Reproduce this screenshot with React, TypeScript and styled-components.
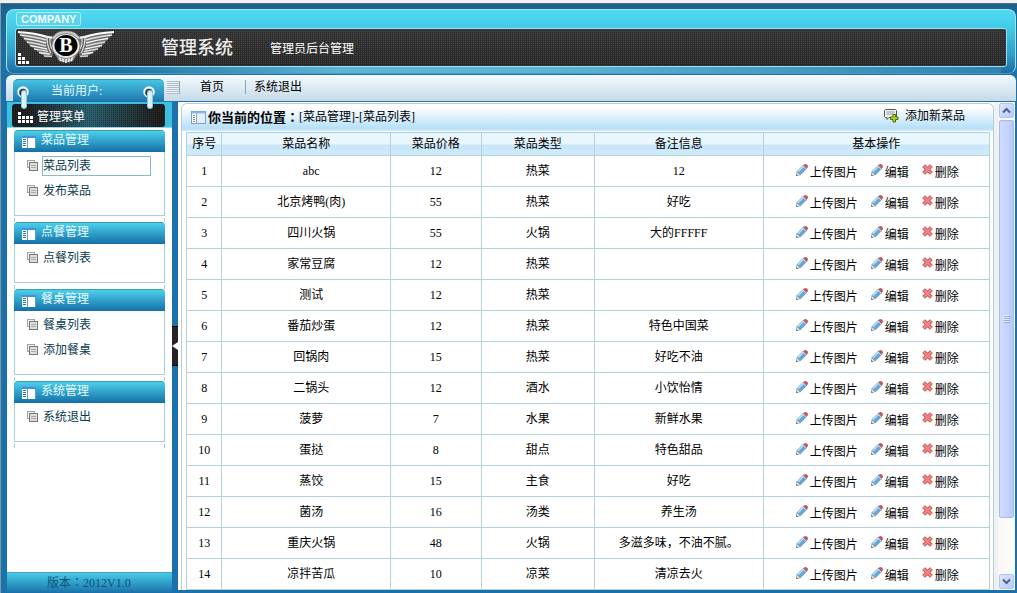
import React from "react";
import styled, { createGlobalStyle } from "styled-components";

const GlobalStyle = createGlobalStyle`
  *, *::before, *::after { box-sizing: border-box; }
  body {
    margin: 0;
    font-family: "Liberation Serif", "Noto Sans CJK SC", serif;
    font-size: 12px;
    line-height: 16px;
    color: #000;
    background: #1c6ea6;
  }
  a { color: inherit; text-decoration: none; }
  button { padding: 0; border: 0; font: inherit; color: inherit; background: none; cursor: pointer; }
  ul, h1, h2, p { margin: 0; padding: 0; list-style: none; font-weight: normal; }
  svg { display: block; flex: none; }
`;

const dots = "conic-gradient(#444 25%, transparent 0) 0 0 / 2px 2px";

const Shell = styled.div`
  display: flex;
  flex-direction: column;
  min-height: 100vh;
  padding: 6px 1px 3px 6px;
  border-top: 3px solid #f1f1ef;
  background: linear-gradient(90deg, #8299a5 1px, transparent 1px),
    linear-gradient(#6d8794 0, #1d5d89 1px, #176593 6px, #1c71aa 60px);
`;

const Header = styled.header`
  display: flex;
  flex-direction: column;
  position: relative;
  height: 65px;
  padding: 0 8px;
  border: 1px solid #a9e4f3;
  border-bottom-color: #4f97bb;
  border-radius: 8px;
  background: linear-gradient(#4fdaf3 0, #43cae7 18px, #2f9cc9 45px, #1b6ca2 100%);
  &::after {
    content: "";
    position: absolute;
    left: 108px;
    right: 14px;
    bottom: 0;
    height: 6px;
    background: linear-gradient(90deg, transparent, #5ab4d5 25%, #5ab4d5 50%, #2f83b3);
  }
`;

const Company = styled.div`
  align-self: flex-start;
  margin: 2px 0 2px 1px;
  padding: 0 4px;
  border: 1px solid #a4edf8;
  border-radius: 2px;
  font: bold 11px/12px "Liberation Sans", sans-serif;
  color: #f0feff;
  background: #5cd3eb;
`;

const TitleBar = styled.div`
  display: flex;
  align-items: center;
  gap: 37px;
  position: relative;
  height: 39px;
  border: 1px solid #9adff0;
  border-radius: 3px;
  color: #fff;
  background: ${dots}, linear-gradient(#343434, #262626);
`;

const Brand = styled.div`
  display: flex;
  align-items: center;
  gap: 45px;
  h1 { font-size: 18px; line-height: 24px; font-weight: 500; color: #ececec; }
`;

const Subtitle = styled.span`
  padding-top: 2px;
`;

const Nav = styled.nav`
  display: flex;
  flex: none;
  height: 27px;
  margin-top: 1px;
  border-bottom: 1px solid #2473ae;
  border-radius: 6px 6px 0 0;
  background: linear-gradient(#f3fafe, #c6d9e6);
`;

const UserTab = styled.div`
  position: relative;
  width: 151px;
  margin: 4px 3px 0 7px;
  padding-left: 38px;
  border-top: 1px solid #3591b8;
  border-radius: 5px 5px 0 0;
  line-height: 22px;
  color: #e6fbff;
  background: linear-gradient(#45c4e2, #1f79ae);
`;

const Ring = styled.svg<{ $side: "left" | "right" }>`
  position: absolute;
  top: 6px;
  ${(p) => p.$side}: ${(p) => (p.$side === "left" ? 4 : 8)}px;
  z-index: 2;
`;

const Stripes = styled.span`
  width: 13px;
  margin: 6px 0 7px;
  border-right: 1px solid #8ea5b4;
  background: repeating-linear-gradient(#adbbc5 0 1px, #eef4f8 1px 2px);
`;

const NavLink = styled.a<{ $divided?: boolean }>`
  align-self: flex-start;
  margin: 5px 0 0 ${(p) => (p.$divided ? 21 : 20)}px;
  padding-left: ${(p) => (p.$divided ? 8 : 0)}px;
  border-left: ${(p) => (p.$divided ? "1px solid #8ea5b4" : "0")};
  line-height: 14px;
`;

const Main = styled.div`
  display: flex;
  flex: 1;
  padding-right: 1px;
`;

const Sidebar = styled.aside`
  display: flex;
  flex-direction: column;
  width: 165px;
  flex: none;
  margin: 0 0 -2px 1px;
  background: #fff;
`;

const MenuTop = styled.div`
  padding: 2px 7px 0 5px;
  border-bottom: 1px solid #8fd8ea;
  background: #3cc0e2;
`;

const MenuTitle = styled.h2`
  display: flex;
  align-items: center;
  gap: 4px;
  height: 23px;
  padding: 3px 0 0 6px;
  border-radius: 3px;
  font-size: 12px;
  line-height: 20px;
  color: #fff;
  background: ${dots}, linear-gradient(90deg, #222 10%, #2d6271 50%, #222 95%);
  background-blend-mode: soft-light;
`;

const Groups = styled.div`
  display: flex;
  flex-direction: column;
  gap: 6px;
  flex: 1;
  padding: 2px 7px 0;
`;

const Group = styled.section`
  position: relative;
  &::after {
    content: "";
    position: absolute;
    left: 0;
    right: 0;
    top: calc(100% + 2px);
    height: 4px;
    border: solid #a8cbd6;
    border-width: 0 1px;
  }
`;

const GroupHead = styled.h2`
  display: flex;
  align-items: center;
  gap: 5px;
  height: 22px;
  padding-left: 8px;
  border-top: 1px solid #3a9cae;
  border-radius: 4px 4px 0 0;
  font-size: 12px;
  line-height: 16px;
  color: #e8fbff;
  background: linear-gradient(#4ad0ea, #156fa7);
  span { padding-bottom: 3px; }
`;

const GroupBody = styled.ul`
  padding: 1px 13px 12px 12px;
  border: solid #a8cfda;
  border-width: 0 1px 1px;
`;

const Item = styled.li`
  display: flex;
  align-items: center;
  gap: 4px;
  height: 25px;
  color: #0a3a50;
`;

const ItemLink = styled.a<{ $current?: boolean }>`
  flex: 1;
  border: 1px solid ${(p) => (p.$current ? "#86bac8" : "transparent")};
  line-height: 18px;
`;

const Version = styled.p`
  height: 20px;
  padding-left: 40px;
  line-height: 18px;
  color: #0e527a;
  border-top: 1px solid #4a9fb9;
  background: linear-gradient(#46cbe7, #1c75ac);
`;

const Centered = styled.span`
  font-family: "Noto Sans CJK TC", sans-serif;
`;

const Splitter = styled.div`
  display: flex;
  align-items: center;
  width: 6px;
  flex: none;
  background: #1c71aa;
  button { width: 6px; height: 40px; border: solid #000; border-width: 1px 0; background: #2a2226; }
`;

const Content = styled.main`
  display: flex;
  flex: 1;
  min-width: 0;
  background: #fff;
`;

const Panel = styled.section`
  flex: 1;
  min-width: 0;
  margin: 1px 0 0 3px;
  border: 1px solid #b3cfd4;
  border-bottom: 0;
  border-radius: 6px 6px 0 0;
`;

const PanelHead = styled.div`
  display: flex;
  align-items: center;
  height: 27px;
  padding: 0 28px 0 9px;
  border-radius: 6px 6px 0 0;
  background: linear-gradient(#fff 10%, #d9eefb 55%, #b5e0fa 90%, #cfeafa);
`;

const Location = styled.p`
  display: flex;
  flex: 1;
  margin-left: 2px;
  strong { font-size: 13px; }
`;

const AddLink = styled.a`
  display: flex;
  align-items: center;
  gap: 6px;
  padding-bottom: 3px;
`;

const Table = styled.table`
  table-layout: fixed;
  width: calc(100% - 7px);
  margin: 1px 3px 0 4px;
  border-collapse: collapse;
  text-align: center;
  th, td { padding: 0; border: 1px solid #b1d3d9; }
  th {
    height: 23px;
    font-weight: normal;
    background: linear-gradient(#e9f6fd 0 50%, #c7e6f8 50%, #d0ebfa);
  }
  td { height: 31px; }
  td:nth-child(2) { padding-left: 10px; }
`;

const Actions = styled.div`
  display: flex;
  justify-content: center;
  gap: 13px;
  padding: 3px 0 0 2px;
`;

const Action = styled.a`
  display: flex;
  gap: 2px;
  svg { margin-top: -1px; }
`;

const ScrollBar = styled.div`
  display: flex;
  flex-direction: column;
  gap: 2px;
  width: 21px;
  flex: none;
  padding: 1px 1px 1px 5px;
  background: linear-gradient(90deg, #eef0f1 4px, #f7f7f4 4px, #fdfdfb);
  button {
    display: flex;
    align-items: center;
    justify-content: center;
    height: 15px;
    border: 1px solid #b1c5f4;
    border-radius: 2px;
    background: linear-gradient(135deg, #dce7ff, #b7cafb);
  }
`;

const Track = styled.div`
  flex: 1;
`;

const Thumb = styled.div`
  display: flex;
  align-items: center;
  justify-content: center;
  height: 88%;
  border: 1px solid #a5bbef;
  border-radius: 2px;
  background: linear-gradient(90deg, #cfddff, #c3d3fd 60%, #b5c7f6);
`;

const Wing = () => (
  <g>
    <path d="M2 3 L30 6 L40 9 L38 22 L36 28 L30 28 L22 23 L12 15 Z" fill="#6f6f6f" />
    <path d="M2 3 Q20 4 31 8 L39 9" stroke="#fff" strokeWidth="2" fill="none" />
    <path d="M4 6 Q20 8 30 11" stroke="#e4e4e4" strokeWidth="1.6" fill="none" />
    <path d="M8 9.500 Q20 11 30 14" stroke="#f6f6f6" strokeWidth="1.7" fill="none" />
    <path d="M11 13 Q21 14.500 30 17" stroke="#dedede" strokeWidth="1.6" fill="none" />
    <path d="M14 16.500 Q22 18 31 20" stroke="#f6f6f6" strokeWidth="1.7" fill="none" />
    <path d="M18 20 Q25 21 32 22.500" stroke="#dcdcdc" strokeWidth="1.6" fill="none" />
    <path d="M23 23.500 Q28 24.500 34 25" stroke="#f0f0f0" strokeWidth="1.6" fill="none" />
    <path d="M28 27 L36 27.500" stroke="#cfcfcf" strokeWidth="1.6" fill="none" />
    <path d="M31 8 Q31 16 35 24 M34 9 Q33 15 36 20" stroke="#d8d8d8" strokeWidth="1.4" fill="none" />
    <path d="M32.500 9 Q32 16 36 24" stroke="#4a4a4a" strokeWidth=".8" fill="none" />
  </g>
);

const Logo = () => (
  <svg width="100" height="37" viewBox="0 0 100 37" aria-label="logo">
    <Wing />
    <g transform="translate(100 0) scale(-1 1)"><Wing /></g>
    <path d="M37 22 L43 32 Q50 35 57 32 L63 22 Z" fill="#8a8a8a" />
    <path d="M43 27 L45 32 M46.500 28 L47.500 33 M50 28 V34 M53.500 28 L52.500 33 M57 27 L55 32" stroke="#f4f4f4" strokeWidth="1.6" />
    <path d="M36 9 Q41 1 50 2 Q59 1 64 9 L60 12 L40 12 Z" fill="#c9c9c9" stroke="#777" strokeWidth=".6" />
    <ellipse cx="50" cy="17" rx="14" ry="12.500" fill="#e8e8e8" stroke="#777" strokeWidth=".8" />
    <ellipse cx="50" cy="16.500" rx="11.500" ry="10.500" fill="#050505" />
    <text x="50" y="23" textAnchor="middle" fontFamily="Liberation Serif, serif" fontWeight="bold" fontSize="20" fill="#fff">B</text>
  </svg>
);

const Blocks = ({ cells, width }: { cells: number[][]; width: number }) => (
  <svg width={width} height="11" viewBox={`0 0 ${width} 11`} fill="#fff">
    {cells.map(([c, r]) => <rect key={`${c}-${r}`} x={c * 4} y={r * 4} width="3" height="3" />)}
  </svg>
);

const Corner = styled.span`
  position: absolute;
  left: 2px;
  bottom: 2px;
`;

const RingMark = ({ side }: { side: "left" | "right" }) => (
  <Ring $side={side} width="13" height="24" viewBox="0 0 13 24">
    <circle cx="6" cy="6" r="5" fill="#d8e9f1" stroke="#f2fbff" strokeWidth="1.500" />
    <circle cx="6" cy="6.500" r="3.800" fill="#2c3e48" />
    <path d="M7 7 V20" stroke="#8fc4df" strokeWidth="6" strokeLinecap="round" />
    <path d="M7 7 V20" stroke="#d3f0fd" strokeWidth="4" strokeLinecap="round" />
    <path d="M6 7 V20" stroke="#f5fdff" strokeWidth="1" />
  </Ring>
);

const PaneIcon = () => (
  <svg width="14" height="12" viewBox="0 0 14 12">
    <path d="M0 0h14v12H0z" fill="#4f9fdb" />
    <path d="M0 0h14v2H0z" fill="#4a8ddd" />
    <path d="M0 2h5v10H0zM6 2h7v10H6z" fill="#fff" />
    <path d="M1 3h3v1H1zM1 5h3v1H1zM1 7h3v1H1zM1 9h3v1H1z" fill="#2a77b0" />
  </svg>
);

const WindowIcon = () => (
  <svg width="15" height="14" viewBox="0 0 15 14">
    <rect x=".5" y=".5" width="14" height="12" fill="#fff" stroke="#7f9fc9" />
    <path d="M1 1.500h13" stroke="#8db4ec" strokeWidth="2" />
    <path d="M5.500 2v10" stroke="#8aa4c4" />
    <path d="M2 4.500h2M2 6.500h2M2 8.500h2M2 10.500h2" stroke="#6c8db8" />
    <path d="M6 3h8v9H6z" fill="#e5effa" />
  </svg>
);

const CopyIcon = () => (
  <svg width="11" height="11" viewBox="0 0 11 11">
    <rect x=".5" y=".5" width="7" height="7" fill="#f4f4f4" stroke="#a3a3a3" />
    <rect x="2.500" y="2.500" width="8" height="8" fill="#dedede" stroke="#777" />
    <path d="M4 5.500h5M4 7.500h5" stroke="#aaa" />
  </svg>
);

const AddIcon = () => (
  <svg width="15" height="14" viewBox="0 0 15 14">
    <path d="M1.500.5h10l1 1v6l-1 1H5l-2 2v-2H1.500l-1-1v-6z" fill="#f1f1ee" stroke="#555" />
    <path d="M2.500 3h8M2.500 5h8" stroke="#999" />
    <path d="M9 5.500h2.500V8H14v2.500h-2.500V13H9v-2.500H6.500V8H9z" fill="#b5d51d" stroke="#526b12" />
  </svg>
);

const PencilIcon = () => (
  <svg width="12" height="12" viewBox="0 0 12 12">
    <path d="M1 7.500 L7.500 1 L11 4.300 L4.500 10.700 L.5 11.500z" fill="#68a5d6" stroke="#5c88ad" strokeWidth=".6" />
    <path d="M2 7.700 L7.700 2" stroke="#b9ddf4" strokeWidth="1.600" />
    <path d="M7.300 1.200 L9 0 Q12 .2 12 3 L10.800 4.600z" fill="#c9545c" />
    <path d="M6.700 1.900 L10.200 5.200" stroke="#dfe6ea" strokeWidth=".8" />
    <path d="M1 8.300 L3.700 11 L.5 11.500z" fill="#eee4d4" />
    <path d="M.3 10 L2 11.700 H.3z" fill="#444" />
  </svg>
);

const DeleteIcon = () => (
  <svg width="11" height="11" viewBox="0 0 11 11">
    <path d="M1.600 1.600 L9.400 9.400 M9.400 1.600 L1.600 9.400" stroke="#c04c50" strokeWidth="4" />
    <path d="M1.800 1.800 L9.200 9.200 M9.200 1.800 L1.800 9.200" stroke="#f08482" strokeWidth="2.400" />
  </svg>
);

const Chevron = ({ up }: { up?: boolean }) => (
  <svg width="9" height="7" viewBox="0 0 9 7">
    <path d={up ? "M1 5.500 L4.500 2 L8 5.500" : "M1 1.500 L4.500 5 L8 1.500"} stroke="#4d6185" strokeWidth="2" fill="none" />
  </svg>
);

const groups = [
  { title: "菜品管理", items: ["菜品列表", "发布菜品"] },
  { title: "点餐管理", items: ["点餐列表"] },
  { title: "餐桌管理", items: ["餐桌列表", "添加餐桌"] },
  { title: "系统管理", items: ["系统退出"] },
];

const columns = [
  ["序号", "4.4%"],
  ["菜品名称", "21%"],
  ["菜品价格", "11.3%"],
  ["菜品类型", "14.1%"],
  ["备注信息", "21%"],
  ["基本操作", "28.2%"],
];

const Col = styled.col<{ $width: string }>`
  width: ${(p) => p.$width};
`;

const dishes = [
  ["abc", "12", "热菜", "12"],
  ["北京烤鸭(肉)", "55", "热菜", "好吃"],
  ["四川火锅", "55", "火锅", "大的FFFFF"],
  ["家常豆腐", "12", "热菜", ""],
  ["测试", "12", "热菜", ""],
  ["番茄炒蛋", "12", "热菜", "特色中国菜"],
  ["回锅肉", "15", "热菜", "好吃不油"],
  ["二锅头", "12", "酒水", "小饮怡情"],
  ["菠萝", "7", "水果", "新鲜水果"],
  ["蛋挞", "8", "甜点", "特色甜品"],
  ["蒸饺", "15", "主食", "好吃"],
  ["菌汤", "16", "汤类", "养生汤"],
  ["重庆火锅", "48", "火锅", "多滋多味，不油不腻。"],
  ["凉拌苦瓜", "10", "凉菜", "清凉去火"],
];

export default function App() {
  return (
    <>
      <GlobalStyle />
      <Shell>
        <Header>
          <Company>COMPANY</Company>
          <TitleBar>
            <Brand>
              <Logo />
              <h1>管理系统</h1>
            </Brand>
            <Subtitle>管理员后台管理</Subtitle>
            <Corner><Blocks width={11} cells={[[0, 0], [0, 1], [1, 1], [0, 2], [1, 2], [2, 2]]} /></Corner>
          </TitleBar>
        </Header>
        <Nav>
          <UserTab>
            <RingMark side="left" />
            当前用户:
            <RingMark side="right" />
          </UserTab>
          <Stripes />
          <NavLink href="#home">首页</NavLink>
          <NavLink href="#exit" $divided>系统退出</NavLink>
        </Nav>
        <Main>
          <Sidebar>
            <MenuTop>
              <MenuTitle>
                <Blocks width={15} cells={[[0, 0], [0, 1], [1, 1], [2, 1], [3, 1], [0, 2], [1, 2], [2, 2], [3, 2]]} />
                管理菜单
              </MenuTitle>
            </MenuTop>
            <Groups>
              {groups.map((group) => (
                <Group key={group.title}>
                  <GroupHead><PaneIcon /><span>{group.title}</span></GroupHead>
                  <GroupBody>
                    {group.items.map((item) => (
                      <Item key={item}>
                        <CopyIcon />
                        <ItemLink href="#menu" $current={item === "菜品列表"}>{item}</ItemLink>
                      </Item>
                    ))}
                  </GroupBody>
                </Group>
              ))}
            </Groups>
            <Version>版本<Centered lang="zh-TW">：</Centered>2012V1.0</Version>
          </Sidebar>
          <Splitter>
            <button type="button" aria-label="收起菜单">
              <svg width="6" height="8" viewBox="0 0 6 8"><path d="M0 4 L6 0 V8z" fill="#fff" /></svg>
            </button>
          </Splitter>
          <Content>
            <Panel>
              <PanelHead>
                <WindowIcon />
                <Location><strong>你当前的位置<Centered lang="zh-TW">：</Centered></strong><span>[菜品管理]-[菜品列表]</span></Location>
                <AddLink href="#add"><AddIcon />添加新菜品</AddLink>
              </PanelHead>
              <Table>
                <colgroup>
                  {columns.map(([name, width]) => <Col key={name} $width={width} />)}
                </colgroup>
                <thead>
                  <tr>{columns.map(([name]) => <th key={name} scope="col">{name}</th>)}</tr>
                </thead>
                <tbody>
                  {dishes.map((dish, index) => (
                    <tr key={dish[0]}>
                      <td>{index + 1}</td>
                      {dish.map((value, i) => <td key={i}>{value}</td>)}
                      <td>
                        <Actions>
                          <Action href="#upload"><PencilIcon />上传图片</Action>
                          <Action href="#edit"><PencilIcon />编辑</Action>
                          <Action href="#delete"><DeleteIcon />删除</Action>
                        </Actions>
                      </td>
                    </tr>
                  ))}
                </tbody>
              </Table>
            </Panel>
            <ScrollBar>
              <button type="button" aria-label="向上滚动"><Chevron up /></button>
              <Track>
                <Thumb>
                  <svg width="7" height="8" viewBox="0 0 7 8"><path d="M0 .5h6M0 2.500h6M0 4.500h6M0 6.500h6" stroke="#eef4ff" /><path d="M1 1.500h6M1 3.500h6M1 5.500h6M1 7.500h6" stroke="#8caae0" /></svg>
                </Thumb>
              </Track>
              <button type="button" aria-label="向下滚动"><Chevron /></button>
            </ScrollBar>
          </Content>
        </Main>
      </Shell>
    </>
  );
}
